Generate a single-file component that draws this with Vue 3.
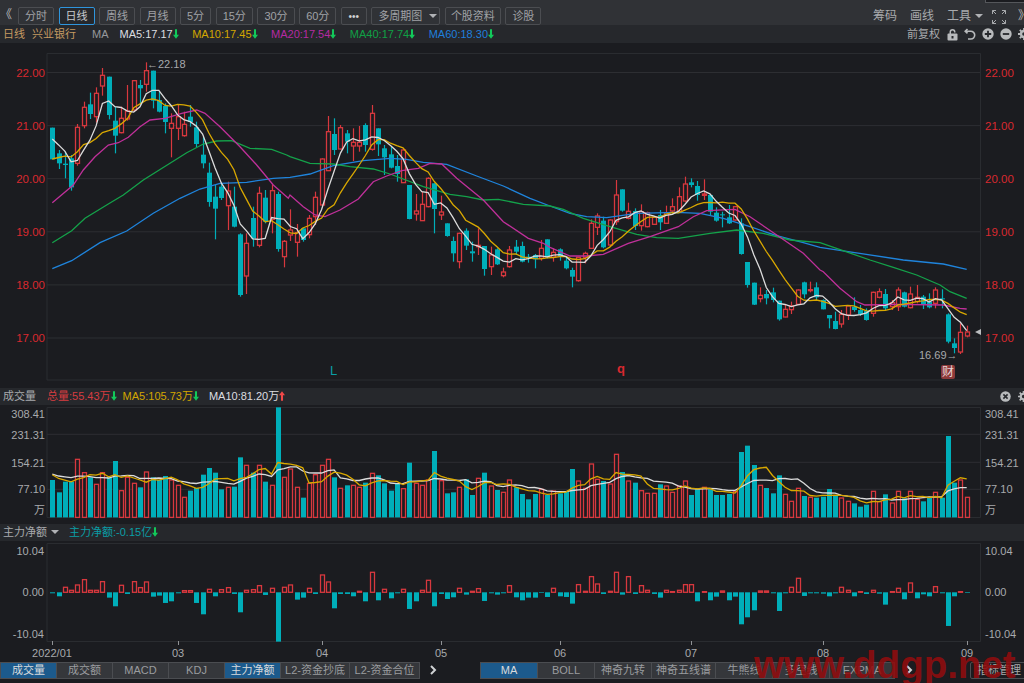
<script setup>
const periods = ['分时', '日线', '周线', '月线', '5分', '15分', '30分', '60分']
const leftTabs = [
  { t: '成交量', on: true }, { t: '成交额' }, { t: 'MACD' }, { t: 'KDJ' },
  { t: '主力净额', on: true }, { t: 'L2-资金抄底', wide: true }, { t: 'L2-资金合位', wide: true }
]
const rightTabs = [
  { t: 'MA', on: true }, { t: 'BOLL' }, { t: '神奇九转' }, { t: '神奇五线谱', wide: true },
  { t: '牛熊线' }, { t: '多空线' }, { t: 'EXPMA', wide: true }
]

// up / down per trading day, 1 = red
const flags = [
  '0000110110', '0111010001', '1100000010', '0101010111', '0111101011',
  '0100001011', '1010010010', '1011000010', '1000111101', '1010111011',
  '1100100001', '0001000111', '0100001100', '0110110110', '0100011'
].join('')
const STEP = 6.263
const xAt = i => 52.3 + STEP * i

// candle rows [bodyTop, bodyBottom, high, low], read off 3x crops, converted with base + v / 3
const segA = [[233,328,233,328],[310,340,300,357],[341,345,305,385],[325,412,315,422],[232,340,222,347],[172,227,155,235],[163,192,128,207],[130,200,112,218],[76,108,54,137],[80,195,80,208],[212,257,170,310],[205,248,170,250],[183,207,105,212],[92,180,90,185],[105,115,90,165],[62,103,37,125],[62,152,62,175],[150,185,125,187],[168,216,160,250],[220,235,190,322],[200,235,165,270],[223,257,185,260],[200,216,165,230],[232,282,215,292],[314,340,260,355],[368,456,338,470],[440,476,405,568],[410,444,400,450],[423,467,395,540],[470,530,410,532],[553,735,550,740],[580,678,550,732],[504,565,470,590],[430,586,410,592],[443,515,420,520],[422,508,403,550],[432,597,425,605],[574,620,570,652],[540,555,478,573]]
const segB = [[398,427,372,470],[385,420,385,425],[355,404,345,415],[292,350,275,375],[177,315,175,315],[95,212,48,212],[102,150,55,165],[83,147,75,148],[100,125,90,160],[127,138,85,183],[127,138,78,155],[75,135,70,155],[40,148,15,152],[85,133,85,168],[145,172,135,225],[163,203,140,205],[198,222,165,245],[150,248,145,248],[255,357,255,358],[333,342,282,362],[313,362,275,362],[235,320,232,322],[250,327,250,400],[336,345,287,360],[370,408,370,410],[423,460,410,485],[400,485,398,505],[392,437,385,450],[454,460,425,485],[436,440,385,465],[438,507,438,527],[465,500,440,525],[448,493,445,495],[516,527,503,532],[450,500,438,503],[440,455,420,465],[438,485,425,487],[470,474,462,488],[465,478,462,505],[445,475,420,482],[418,472,418,475]]
const segC = [[247,262,235,275],[238,258,235,272],[272,295,258,298],[300,320,293,352],[262,332,262,335],[250,262,245,280],[160,235,148,235],[138,172,130,195],[152,232,140,235],[150,225,148,228],[75,155,30,165],[58,122,58,125],[124,145,98,148],[123,168,115,180],[125,167,103,182],[128,170,125,172],[142,163,138,165],[135,157,120,180],[128,160,107,160],[110,123,85,130],[80,125,52,128],[42,93,20,97],[37,45,25,52],[48,75,33,92],[72,76,28,90],[75,125,72,135],[128,152,112,155],[133,136,125,172],[142,160,105,162],[110,150,108,152],[160,252,145,254],[276,345,276,353],[338,404,338,405],[376,386,352,397],[372,385,360,403],[367,390,353,397],[392,448,392,452],[418,441,405,442],[408,419,395,432],[360,403,358,405]]
const segD = [[67,103,65,115],[89,92,65,97],[82,112,67,120],[120,148,118,148],[165,175,165,205],[183,207,155,208],[163,192,150,203],[138,165,135,180],[140,150,112,155],[150,163,135,168],[152,180,145,182],[97,160,95,170],[95,112,85,115],[102,145,87,150],[128,140,120,150],[90,140,82,153],[97,140,95,142],[102,143,80,145],[112,125,75,130],[110,135,105,147],[125,142,100,145],[90,130,82,145],[115,118,88,145],[163,245,160,250],[250,264,235,280],[217,276,190,282],[216,228,197,232]]
const conv = (rows, base) => rows.map(r => r.map(v => base + v / 3))
const candleRows = [...conv(segA, 50), ...conv(segB, 100), ...conv(segC, 170), ...conv(segD, 260)]
const candles = candleRows.map((r, i) => {
  const up = flags[i] === '1'
  const w = up ? 4 : 5
  const cx = Math.round(xAt(i))
  return {
    up, cx: cx + 0.5,
    x: up ? cx - 1.5 : cx - 2,
    y: r[0], w, h: Math.max(r[1] - r[0], 1),
    hi: r[2], lo: r[3], close: up ? r[0] : r[1]
  }
})

function movingAvg(values, n, prior) {
  return values.map((_, i) => {
    let sum = 0
    for (let k = i - n + 1; k <= i; k++) sum += k >= 0 ? values[k] : prior(k)
    return sum / n
  })
}
const toPoints = (ys) => ys.map((y, i) => `${xAt(i).toFixed(1)},${y.toFixed(1)}`).join(' ')

const closes = candles.map(c => c.close)
const priorClose = k => (k >= -4 ? 134 : 179)
const ma5Line = toPoints(movingAvg(closes, 5, priorClose))
const ma10Line = toPoints(movingAvg(closes, 10, priorClose))

// long averages traced by hand, [zoom x, zoom y] groups per crop
function traced(groups) {
  const out = []
  groups.forEach(([ox, oy, pts]) => {
    pts.forEach(([x, y]) => {
      const px = ox + x / 3
      if (!out.length || px > out[out.length - 1][0]) out.push([px, oy + y / 3])
    })
  })
  return out.map(p => p.map(v => v.toFixed(1)).join(',')).join(' ')
}
const ma20Line = traced([
  [40, 50, [[37,458],[100,405],[130,360],[165,320],[205,285],[235,278],[265,262],[300,230],[330,210],[375,205],[425,190],[470,180],[495,190],[540,230],[600,290],[650,345],[700,405],[745,445]]],
  [290, 100, [[0,285],[40,320],[75,345],[105,350],[150,330],[205,297],[250,245],[290,228],[335,212],[385,205],[420,190],[455,192],[500,235],[580,300],[640,365],[715,415],[760,430]]],
  [550, 170, [[0,232],[60,258],[110,258],[160,253],[235,220],[300,200],[385,170],[430,140],[470,122],[555,118],[600,140],[680,195],[760,250],[810,300]]],
  [800, 260, [[30,0],[70,35],[120,85],[170,125],[195,135],[290,133],[430,135],[480,145],[500,147]]]
])
const ma40Line = traced([
  [40, 50, [[37,578],[95,542],[135,505],[205,462],[250,435],[310,390],[390,340],[440,308],[490,282],[530,273],[575,272],[630,295],[695,298],[740,315]]],
  [290, 100, [[0,170],[60,190],[130,192],[180,200],[250,207],[300,222],[400,260],[480,283],[530,290],[580,300],[625,298],[700,313]]],
  [550, 170, [[0,108],[40,118],[100,145],[180,170],[260,193],[320,203],[385,205],[480,190],[560,180],[640,190],[720,210],[810,218]]],
  [800, 260, [[210,0],[280,22],[350,45],[420,75],[450,95],[500,115]]]
])
const ma60Line = traced([
  [40, 50, [[37,656],[95,632],[180,578],[260,543],[340,490],[420,445],[480,417],[540,400],[620,397],[700,385]]],
  [290, 100, [[0,232],[60,222],[130,197],[220,182],[300,175],[350,178],[400,187],[470,193],[560,228],[640,258],[720,295]]],
  [550, 170, [[0,108],[60,130],[110,140],[170,143],[260,130],[380,127],[450,130],[520,145],[600,170],[680,197],[760,218],[810,232]]],
  [800, 260, [[310,0],[430,12],[500,28]]]
])

const mainGrid = [
  { y: 72.5, t: '22.00' }, { y: 125.6, t: '21.00' }, { y: 178.7, t: '20.00' },
  { y: 231.8, t: '19.00' }, { y: 284.9, t: '18.00' }, { y: 338, t: '17.00' }
]

// volume bars, tops in crop pixels (base 400)
const volTops = [240,277,245,245,178,218,232,253,218,232,183,272,232,250,262,216,232,240,228,240,256,292,272,264,224,204,218,268,262,260,172,196,218,196,245,256,22,232,207,262,293,250,224,196,178,232,265,256,256,262,248,220,226,250,272,252,266,188,250,256,240,153,242,280,277,262,238,285,235,218,258,270,277,240,262,282,298,282,268,285,273,280,275,207,243,265,192,238,243,252,163,216,243,248,272,280,280,253,258,277,258,243,285,268,262,268,285,285,282,275,156,137,195,256,264,280,226,283,304,265,288,292,293,290,267,285,294,304,310,320,314,274,305,283,309,274,295,274,298,304,293,277,293,108,248,240,292]
const VOL_BASE = 517.4
const vols = volTops.map((t, i) => {
  const up = flags[i] === '1'
  const cx = Math.round(xAt(i))
  const y = 400 + t / 3
  return { up, x: up ? cx - 1.5 : cx - 2, y, w: up ? 4 : 5, h: VOL_BASE - y }
})
const volHeights = volTops.map(t => 352 - t)
const volLine = n => toPoints(movingAvg(volHeights, n, () => 132).map(h => VOL_BASE - h / 3))
const volMa5 = volLine(5)
const volMa10 = volLine(10)

// main net flow, crop pixels from the zero line
const flow = [-3,-12,15,6,22,38,6,6,32,-16,-42,21,-5,32,14,31,-13,-10,-32,-27,-3,5,5,-32,-66,9,-12,8,14,-5,-60,6,8,20,-8,12,-148,15,22,-22,-16,12,-5,52,31,-48,-5,-5,-12,3,-27,60,-24,9,-18,-3,9,-50,-27,6,36,-42,-5,-20,-15,12,-7,3,11,-26,-3,-7,-3,20,-15,-24,-16,-16,-2,-14,12,-12,-14,-34,23,3,47,25,-5,3,60,-7,47,-5,20,6,-5,-16,6,2,6,23,23,-27,2,-24,-13,4,-24,-13,-96,-75,-54,4,4,-3,-56,-3,15,42,-11,-3,-3,-4,-12,-3,15,6,-12,2,-5,6,-4,-37,2,12,-21,28,-18,-6,-12,17,-3,-101,-12,2,-2]
const ZERO = 592.3
const flowBars = flow.map((v, i) => {
  const up = v > 0
  const cx = Math.round(xAt(i))
  const h = Math.abs(v) / 3
  return { up, x: up ? cx - 1.5 : cx - 2, y: up ? ZERO - h : ZERO, w: up ? 4 : 5, h }
})

const volAxis = [
  { y: 418, t: '308.41' }, { y: 439, t: '231.31' }, { y: 467, t: '154.21' },
  { y: 493, t: '77.10' }
]
const volGrid = [434.3, 462.3, 489.3]
const flowAxis = [{ y: 555, t: '10.04' }, { y: 596, t: '0.00' }, { y: 638, t: '-10.04' }]
const months = [
  { x: 52, t: '2022/01' }, { x: 178, t: '03' }, { x: 322, t: '04' }, { x: 441, t: '05' },
  { x: 560, t: '06' }, { x: 691, t: '07' }, { x: 823, t: '08' }, { x: 967, t: '09' }
]
</script>

<template>
  <div class="app">
    <div class="toolbar">
      <span class="fold">《</span>
      <button v-for="p in periods" :key="p" class="btn" :class="{ active: p === '日线' }">{{ p }}</button>
      <button class="btn dots">•••</button>
      <button class="btn multi">多周期图<i class="caret"></i></button>
      <button class="btn tight">个股资料</button>
      <button class="btn">诊股</button>
      <div class="tools">
        <span>筹码</span>
        <span>画线</span>
        <span class="tool-drop">工具<i class="caret"></i></span>
        <svg class="full" width="14" height="14" viewBox="0 0 14 14" fill="none" stroke="#a8aaad" stroke-width="1">
          <path d="M.5 4V.5H4M.5.5l3.5 3.5M10 .5h3.500V4M13.500.5L10 4M.5 10v3.500H4M.5 13.500L4 10M10 13.500h3.500V10M13.500 13.500L10 10" />
        </svg>
        <span class="fold right">》</span>
      </div>
    </div>

    <div class="info">
      <span class="tan">日线</span>
      <span class="tan name">兴业银行</span>
      <span class="ma-tag">MA</span>
      <span class="c-white">MA5:17.17<svg class="arr" viewBox="0 0 7 11"><path d="M2.300 0h2.400v6.500H7L3.500 11 0 6.500h2.300z" fill="#12c95a" /></svg></span>
      <span class="c-yellow">MA10:17.45<svg class="arr" viewBox="0 0 7 11"><path d="M2.300 0h2.400v6.500H7L3.500 11 0 6.500h2.300z" fill="#12c95a" /></svg></span>
      <span class="c-pink">MA20:17.54<svg class="arr" viewBox="0 0 7 11"><path d="M2.300 0h2.400v6.500H7L3.500 11 0 6.500h2.300z" fill="#12c95a" /></svg></span>
      <span class="c-green">MA40:17.74<svg class="arr" viewBox="0 0 7 11"><path d="M2.300 0h2.400v6.500H7L3.500 11 0 6.500h2.300z" fill="#12c95a" /></svg></span>
      <span class="c-blue">MA60:18.30<svg class="arr" viewBox="0 0 7 11"><path d="M2.300 0h2.400v6.500H7L3.500 11 0 6.500h2.300z" fill="#12c95a" /></svg></span>
      <div class="info-right">
        <span class="fq">前复权</span>
        <svg width="11" height="13" viewBox="0 0 11 13"><path d="M2.500 6V4a3 3 0 0 1 6 0v.5H7V4a1.500 1.500 0 0 0-3 0v2z" fill="#b8babc" /><rect x="0.500" y="5.500" width="10" height="7" rx="1" fill="#b8babc" /><rect x="4.500" y="8" width="2" height="2.500" fill="#26282c" /></svg>
        <svg width="12" height="12" viewBox="0 0 12 12" fill="none" stroke="#b8babc" stroke-width="1.600"><path d="M3.500 1 1.200 3.200 3.500 5.400M1.500 3.200h5.300a3.900 3.900 0 0 1 0 7.800H4" /></svg>
        <svg width="12" height="12" viewBox="0 0 12 12"><circle cx="6" cy="6" r="5.700" fill="#b8babc" /><path d="M2.800 6h6.400M6 2.800v6.400" stroke="#26282c" stroke-width="1.800" /></svg>
        <svg width="12" height="12" viewBox="0 0 12 12"><circle cx="6" cy="6" r="5.700" fill="#b8babc" /><path d="M2.800 6h6.400" stroke="#26282c" stroke-width="1.800" /></svg>
        <svg width="12" height="12" viewBox="0 0 12 12" fill="none" stroke="#b8babc"><circle cx="6" cy="6" r="3" stroke-width="2.400" /><path d="M6 0v2.500M6 9.500V12M0 6h2.500M9.500 6H12M1.800 1.800l1.800 1.800M8.400 8.400l1.800 1.800M1.800 10.200l1.800-1.800M8.400 3.600l1.800-1.800" stroke-width="1.800" /></svg>
      </div>
    </div>

    <svg class="chart main" width="1024" height="338" viewBox="0 43 1024 338">
      <path d="M47 53.500H980.500V380H47z" class="frame" />
      <g v-for="g in mainGrid" :key="g.t">
        <line x1="47" x2="980" :y1="g.y" :y2="g.y" class="grid" />
        <text x="45" :y="g.y + 4" text-anchor="end" class="red-label">{{ g.t }}</text>
        <text x="985" :y="g.y + 4" class="red-label">{{ g.t }}</text>
      </g>
      <g v-for="(c, i) in candles" :key="i">
        <line :x1="c.cx" :x2="c.cx" :y1="c.hi" :y2="c.lo" :class="c.up ? 'wick-up' : 'wick-down'" />
        <rect :x="c.x" :y="c.y" :width="c.w" :height="c.h" :class="c.up ? 'bar-up' : 'bar-down'" />
      </g>
      <polyline :points="ma60Line" class="ma" stroke="#1f84dc" />
      <polyline :points="ma40Line" class="ma" stroke="#14a24a" />
      <polyline :points="ma20Line" class="ma" stroke="#c0309a" />
      <polyline :points="ma10Line" class="ma" stroke="#d9a800" />
      <polyline :points="ma5Line" class="ma" stroke="#dcdcdc" />
      <text x="147" y="68" class="mark">←22.18</text>
      <text x="919" y="359" class="mark">16.69→</text>
      <text x="330" y="375" class="letter teal">L</text>
      <text x="617" y="373" class="letter pink">q</text>
      <path d="M975 332l6-3v6z" fill="#bbbdbf" />
    </svg>

    <div class="band head-vol">
      <span class="band-title">成交量</span>
      <span class="c-red">总量:55.43万<svg class="arr" viewBox="0 0 7 11"><path d="M2.300 0h2.400v6.500H7L3.500 11 0 6.500h2.300z" fill="#12c95a" /></svg></span>
      <span class="c-yellow">MA5:105.73万<svg class="arr" viewBox="0 0 7 11"><path d="M2.300 0h2.400v6.500H7L3.500 11 0 6.500h2.300z" fill="#12c95a" /></svg></span>
      <span class="c-white">MA10:81.20万<svg class="arr" viewBox="0 0 7 11"><path d="M2.300 11h2.400V4.500H7L3.500 0 0 4.500h2.300z" fill="#f04848" /></svg></span>
      <div class="band-icons">
        <svg width="11" height="11" viewBox="0 0 12 12"><circle cx="6" cy="6" r="5.700" fill="#b8babc" /><path d="M3.700 3.700l4.600 4.600M8.300 3.700l-4.600 4.600" stroke="#26282c" stroke-width="1.700" /></svg>
        <svg width="11" height="11" viewBox="0 0 12 12" fill="none" stroke="#b8babc"><circle cx="6" cy="6" r="3" stroke-width="2.400" /><path d="M6 0v2.500M6 9.500V12M0 6h2.500M9.500 6H12M1.800 1.800l1.800 1.800M8.400 8.400l1.800 1.800M1.800 10.200l1.800-1.800M8.400 3.600l1.800-1.800" stroke-width="1.800" /></svg>
      </div>
    </div>

    <svg class="chart vol" width="1024" height="116" viewBox="0 405 1024 116">
      <path d="M47 407.500H980.500V517.500H47z" class="frame" />
      <line v-for="y in volGrid" :key="y" x1="47" x2="980" :y1="y" :y2="y" class="grid" />
      <g v-for="a in volAxis" :key="a.t">
        <text x="45" :y="a.y" text-anchor="end" class="axis">{{ a.t }}</text>
        <text x="985" :y="a.y" class="axis">{{ a.t }}</text>
      </g>
      <text x="45" y="514" text-anchor="end" class="axis cjk">万</text>
      <text x="985" y="514" class="axis cjk">万</text>
      <rect v-for="(b, i) in vols" :key="i" :x="b.x" :y="b.y" :width="b.w" :height="b.h" :class="b.up ? 'bar-up' : 'bar-down'" />
      <polyline :points="volMa10" class="ma" stroke="#dcdcdc" />
      <polyline :points="volMa5" class="ma" stroke="#d9a800" />
    </svg>

    <div class="band head-flow">
      <span class="band-title">主力净额<i class="caret"></i></span>
      <span class="c-teal">主力净额:-0.15亿<svg class="arr" viewBox="0 0 7 11"><path d="M2.300 0h2.400v6.500H7L3.500 11 0 6.500h2.300z" fill="#12c95a" /></svg></span>
    </div>

    <svg class="chart flow" width="1024" height="119" viewBox="0 541 1024 119">
      <path d="M47 543.500H980.500V641.500H47z" class="frame" />
      <g v-for="a in flowAxis" :key="a.t">
        <text x="44" :y="a.y" text-anchor="end" class="axis">{{ a.t }}</text>
        <text x="985" :y="a.y" class="axis">{{ a.t }}</text>
      </g>
      <rect v-for="(b, i) in flowBars" :key="i" :x="b.x" :y="b.y" :width="b.w" :height="b.h" :class="b.up ? 'bar-up' : 'bar-down'" />
      <g v-for="m in months" :key="m.t">
        <line :x1="m.x + 0.500" :x2="m.x + 0.500" y1="641" y2="645" class="tick" />
        <text :x="m.x" y="657" text-anchor="middle" class="axis">{{ m.t }}</text>
      </g>
    </svg>

    <div class="tabs-row">
      <div class="tabs">
        <div v-for="t in leftTabs" :key="t.t" class="tab" :class="{ on: t.on, wide: t.wide }">{{ t.t }}</div>
      </div>
      <svg class="chev" width="8" height="10" viewBox="0 0 8 10" fill="none" stroke="#d0d2d4" stroke-width="2"><path d="M2 1l4 4-4 4" /></svg>
      <div class="tabs second">
        <div v-for="t in rightTabs" :key="t.t" class="tab" :class="{ on: t.on, wide: t.wide }">{{ t.t }}</div>
      </div>
      <svg class="chev" width="8" height="10" viewBox="0 0 8 10" fill="none" stroke="#d0d2d4" stroke-width="2"><path d="M2 1l4 4-4 4" /></svg>
      <div class="manage">指标管理</div>
    </div>

    <div class="notch"></div>
    <div class="badge">财</div>
    <div class="watermark">www.ddgp.net</div>
  </div>
</template>

<style scoped>
.app {
  position: relative;
  width: 1024px;
  height: 683px;
  overflow: hidden;
  display: flex;
  flex-direction: column;
  background: #1b1c20;
  font-family: "Liberation Sans", "Noto Sans CJK SC", sans-serif;
  font-size: 11px;
  color: #a8aaad;
}

.toolbar {
  height: 25px;
  flex: none;
  box-sizing: border-box;
  padding-top: 7px;
  display: flex;
  align-items: flex-start;
  gap: 4.500px;
  background: #303236;
}

.fold {
  width: 13.500px;
  margin-top: -1px;
  font-size: 12px;
  line-height: 18px;
  color: #b8babc;
}

.btn {
  height: 18px;
  padding: 0 6px;
  box-sizing: border-box;
  border: 1px solid #4b4d51;
  border-radius: 2px;
  background: #303236;
  color: #a0a2a6;
  font: inherit;
  line-height: 15px;
  white-space: nowrap;
}

.btn.active {
  border-color: #2f95dc;
  background: #26282c;
  color: #c8cacc;
}

.btn.dots {
  width: 26px;
  padding: 0;
  font-size: 10px;
  color: #d0d2d4;
}

.btn.multi {
  width: 69px;
  padding: 0 0 0 6px;
  text-align: left;
}

.btn.tight {
  padding: 0 5px;
}

.caret {
  display: inline-block;
  margin-left: 7px;
  vertical-align: 2px;
  border-left: 4px solid transparent;
  border-right: 4px solid transparent;
  border-top: 4px solid #b0b2b5;
}

.tools {
  margin-left: auto;
  height: 18px;
  display: flex;
  align-items: center;
  gap: 13px;
  font-size: 12px;
  line-height: 18px;
}

.tool-drop {
  width: 36px;
  white-space: nowrap;
}

.tool-drop .caret {
  margin-left: 4px;
}

.full {
  flex: none;
  margin-left: -4px;
  margin-top: 1px;
}

.fold.right {
  width: 6px;
  overflow: hidden;
  margin-left: -1px;
}

.info {
  height: 18px;
  flex: none;
  display: flex;
  align-items: center;
  padding-left: 3px;
  background: #26282c;
  line-height: 18px;
  white-space: nowrap;
}

.tan {
  color: #c59a62;
}

.name {
  margin-left: 7px;
}

.ma-tag {
  margin-left: 16px;
  margin-right: 11px;
  color: #96989b;
}

.info .c-white,
.info .c-yellow,
.info .c-pink,
.info .c-green,
.info .c-blue {
  margin-right: 13.500px;
}

.c-white { color: #dcdee0; }
.c-yellow { color: #d2a600; }
.c-pink { color: #b52aa2; }
.c-green { color: #10a045; }
.c-blue { color: #1f7fdc; }
.c-red { color: #d63c40; }
.c-teal { color: #0a9ea6; margin-left: 11px; }

.arr {
  width: 6px;
  height: 10px;
  vertical-align: -1px;
}

.info-right {
  margin-left: auto;
  display: flex;
  align-items: center;
  gap: 6px;
  width: 117px;
  flex: none;
}

.info-right svg {
  flex: none;
}

.fq {
  flex: none;
  margin-right: 1px;
}

.chart {
  display: block;
  flex: none;
}

.main {
  margin-bottom: 7px;
}

.band {
  height: 17px;
  flex: none;
  display: flex;
  align-items: center;
  padding-left: 3px;
  background: #26282c;
  line-height: 17px;
  white-space: nowrap;
}

.band-title {
  margin-right: 11px;
}

.head-vol .c-red {
  margin-right: 6px;
}

.head-vol .c-yellow {
  margin-right: 10px;
}

.head-flow .band-title {
  margin-right: 0;
  width: 55px;
}

.head-flow .caret {
  margin-left: 4px;
}

.band-icons {
  margin-left: auto;
  display: flex;
  gap: 7px;
  width: 24px;
  flex: none;
}

.band-icons svg {
  flex: none;
}

.vol {
  margin-bottom: 3px;
}

.frame {
  fill: none;
  stroke: #2a2c30;
  stroke-width: 1;
}

.grid {
  stroke: #2d2e32;
  stroke-width: 1;
}

.tick {
  stroke: #909295;
}

.red-label {
  fill: #d9292f;
  font-size: 11.500px;
}

.axis {
  fill: #a8aaad;
  font-size: 11px;
}

.mark {
  fill: #a8aaad;
  font-size: 11px;
}

.letter {
  font-size: 13px;
}

.letter.teal { fill: #0a9ea6; }
.letter.pink { fill: #d9292f; font-weight: 700; }

.wick-up { stroke: #d8383e; stroke-width: 1.200; }
.wick-down { stroke: #00aeb9; stroke-width: 1.200; }

.bar-up {
  fill: #1b1c20;
  stroke: #d8383e;
  stroke-width: 1.300;
}

.bar-down {
  fill: #00aeb9;
}

.ma {
  fill: none;
  stroke-width: 1.300;
}

.tabs-row {
  height: 17px;
  margin-top: 2px;
  flex: none;
  display: flex;
  align-items: flex-start;
}

.tabs {
  display: flex;
  height: 17px;
  border: 1px solid #4b4d51;
  box-sizing: border-box;
  background: #35373b;
}

.tab {
  width: 56px;
  border-right: 1px solid #4b4d51;
  box-sizing: border-box;
  text-align: center;
  line-height: 15px;
  color: #9a9c9f;
  white-space: nowrap;
}

.tab:last-child {
  border-right: none;
}

.tab.on {
  background: #1c5a8c;
  color: #d8dadc;
}

.tab.wide {
  width: 69px;
}

.second .tab {
  width: 57px;
}

.second .tab.wide {
  width: 64px;
}

.chev {
  flex: none;
  margin: 3px 9px 0 9px;
}

.second + .chev {
  margin-left: 10px;
}

.tabs-row > .chev:nth-child(2) {
  margin-right: 43px;
}

.manage {
  margin-left: auto;
  margin-right: -4px;
  width: 58px;
  flex: none;
  height: 17px;
  box-sizing: border-box;
  border: 1px solid #4b4d51;
  border-radius: 2px;
  text-align: center;
  line-height: 15px;
}

.notch {
  position: absolute;
  top: 0;
  right: 0;
  width: 38px;
  height: 2px;
  background: #1b1c20;
  border-left: 1px solid #55575b;
  border-bottom: 1px solid #55575b;
}

.badge {
  position: absolute;
  left: 941px;
  top: 365px;
  width: 14px;
  height: 14px;
  background: #8c3a3a;
  border-radius: 2px;
  color: #e8d6d6;
  font-size: 12px;
  line-height: 14px;
  text-align: center;
}

.watermark {
  position: absolute;
  left: 754px;
  top: 642px;
  font-family: "Liberation Sans", sans-serif;
  font-weight: 700;
  font-size: 38.500px;
  line-height: 45px;
  color: rgba(145, 12, 14, 0.88);
  white-space: nowrap;
}
</style>
